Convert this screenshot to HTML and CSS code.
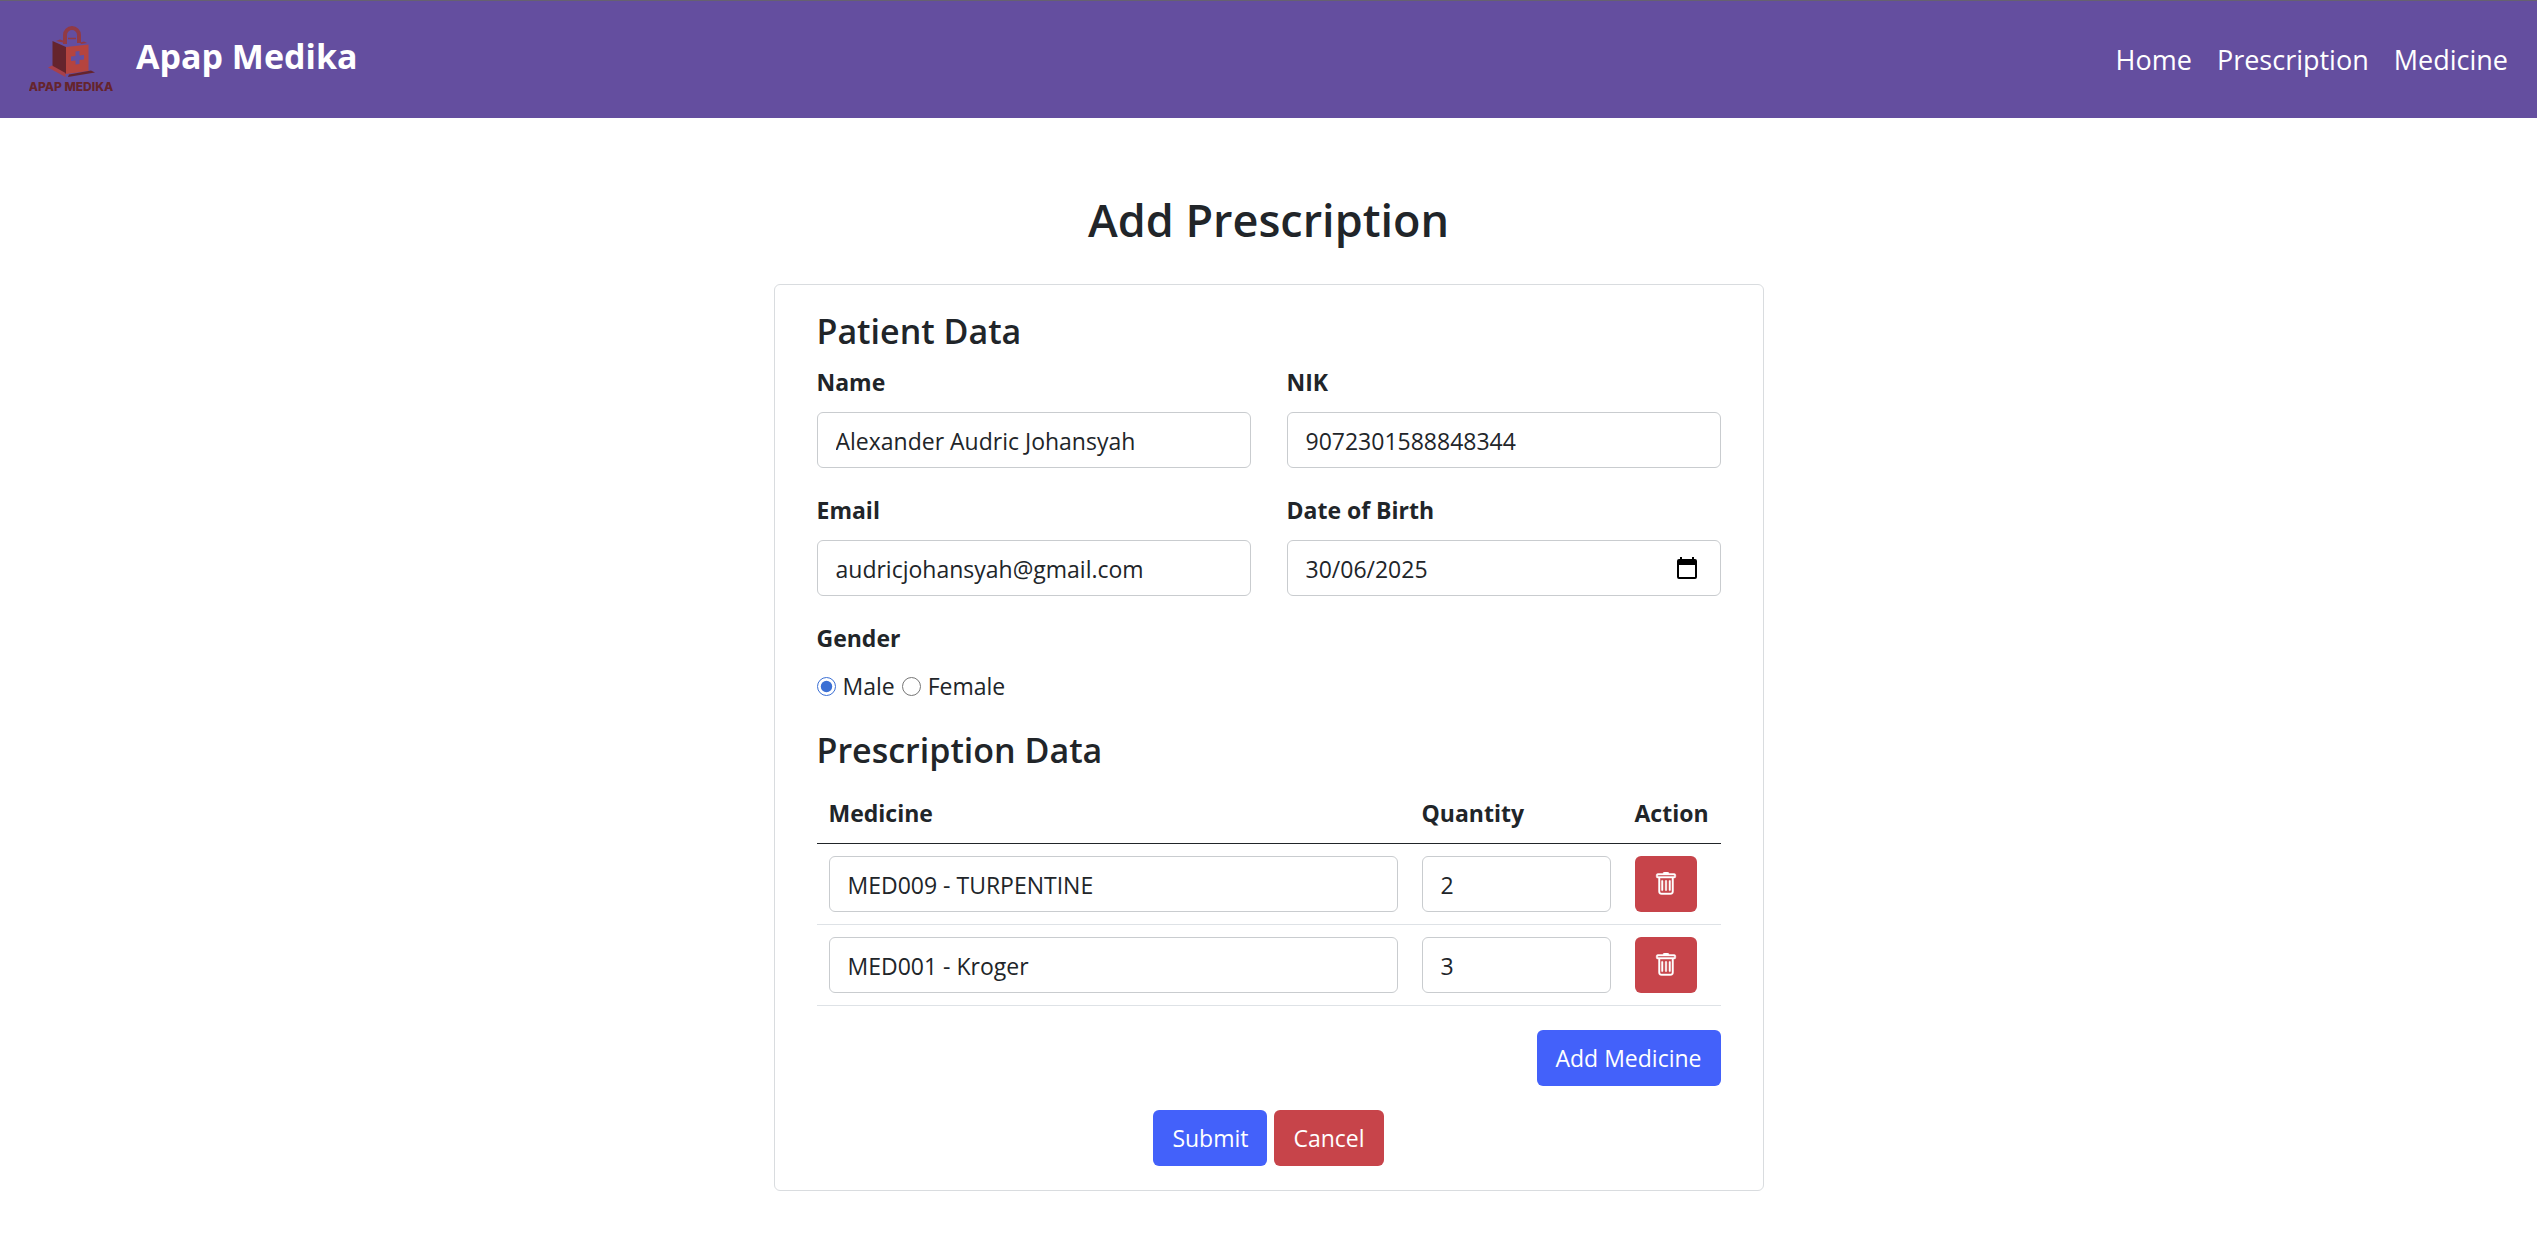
FILE: index.html
```html
<!DOCTYPE html>
<html lang="en">
<head>
<meta charset="utf-8">
<meta name="viewport" content="width=device-width, initial-scale=1">
<title>Apap Medika - Add Prescription</title>
<link rel="stylesheet" href="styles.css">
</head>
<body>
<header class="navbar">
  <a class="brand" href="#">
    <svg class="brand-logo" viewBox="0 0 84 67" width="84" height="67" role="img" aria-label="Apap Medika logo">
      <path d="M36 18V9a7 7 0 0 1 14 0v8" fill="none" stroke="#913a45" stroke-width="4"/>
      <path d="M39 12.500h8" stroke="#913a45" stroke-width="1.500"/>
      <path d="M27 15l4-1.500 3 1v2zM51 16.500l4-1 3 1.500-6 1z" fill="#913a45"/>
      <path d="M23.500 15L37 21v27l-13.500-6z" fill="#65242d"/>
      <path d="M37 21l22.500-2.500V45L37 48z" fill="#b5443f"/>
      <path d="M46.500 25.500l4-.5v4.500l4.500-.5v4.500l-4.500.5v4l-4 .5v-4l-4.500.5v-4.500l4.500-.5z" fill="#644e9f"/>
      <path d="M19 41.500l4-2 13.500 7.500v4z" fill="#a8404a"/>
      <path d="M40 48.500l22-4 4 2L39 51z" fill="#65242d"/>
      <text class="logo-text" x="42" y="65" text-anchor="middle">APAP MEDIKA</text>
    </svg>
    <span class="brand-name">Apap Medika</span>
  </a>
  <nav class="nav-links" aria-label="Main">
    <a href="#">Home</a>
    <a href="#">Prescription</a>
    <a href="#">Medicine</a>
  </nav>
</header>

<main class="page">
  <h1 class="page-title">Add Prescription</h1>
  <form class="card">
    <h2 class="section-title">Patient Data</h2>
    <div class="field-grid">
      <div class="field">
        <label class="label" for="name">Name</label>
        <input class="control" id="name" type="text" value="Alexander Audric Johansyah">
      </div>
      <div class="field">
        <label class="label" for="nik">NIK</label>
        <input class="control" id="nik" type="text" value="9072301588848344">
      </div>
      <div class="field">
        <label class="label" for="email">Email</label>
        <input class="control" id="email" type="email" value="audricjohansyah@gmail.com">
      </div>
      <div class="field">
        <label class="label" for="birth">Date of Birth</label>
        <div class="date-box">
          <input class="control" id="birth" type="text" inputmode="numeric" value="30/06/2025">
          <button class="date-button" type="button" aria-label="Open calendar">
            <svg viewBox="0 0 20 22" width="20" height="22" aria-hidden="true">
              <path fill="#000" fill-rule="evenodd" d="M3 0h2v2h10V0h2v2h1a2 2 0 0 1 2 2v16a2 2 0 0 1-2 2H2a2 2 0 0 1-2-2V4a2 2 0 0 1 2-2h1zM2 8v12h16V8z"/>
            </svg>
          </button>
        </div>
      </div>
    </div>
    <fieldset class="gender">
      <legend class="label">Gender</legend>
      <div class="radio-row">
        <label class="radio"><input type="radio" name="gender" value="male" checked>Male</label>
        <label class="radio"><input type="radio" name="gender" value="female">Female</label>
      </div>
    </fieldset>

    <h2 class="section-title">Prescription Data</h2>
    <table class="medicines">
      <thead>
        <tr>
          <th class="col-medicine" scope="col">Medicine</th>
          <th class="col-quantity" scope="col">Quantity</th>
          <th class="col-action" scope="col">Action</th>
        </tr>
      </thead>
      <tbody>
        <tr>
          <td><select class="control" aria-label="Medicine 1"><option>MED009 - TURPENTINE</option></select></td>
          <td><input class="control" type="text" inputmode="numeric" value="2" aria-label="Quantity 1"></td>
          <td>
            <button class="btn btn-danger" type="button" aria-label="Remove medicine 1">
              <svg viewBox="0 0 16 16" width="24" height="24" fill="currentColor" stroke="currentColor" stroke-width="0.300" aria-hidden="true">
                <path d="M5.500 5.500A.5.5 0 0 1 6 6v6a.5.5 0 0 1-1 0V6a.5.5 0 0 1 .5-.5m2.500 0a.5.5 0 0 1 .5.5v6a.5.5 0 0 1-1 0V6a.5.5 0 0 1 .5-.5m3 .5a.5.5 0 0 0-1 0v6a.5.5 0 0 0 1 0z"/>
                <path d="M14.500 3a1 1 0 0 1-1 1H13v9a2 2 0 0 1-2 2H5a2 2 0 0 1-2-2V4h-.5a1 1 0 0 1-1-1V2a1 1 0 0 1 1-1H6a1 1 0 0 1 1-1h2a1 1 0 0 1 1 1h3.500a1 1 0 0 1 1 1zM4.118 4 4 4.059V13a1 1 0 0 0 1 1h6a1 1 0 0 0 1-1V4.059L11.882 4zM2.500 3h11V2h-11z"/>
              </svg>
            </button>
          </td>
        </tr>
        <tr>
          <td><select class="control" aria-label="Medicine 2"><option>MED001 - Kroger</option></select></td>
          <td><input class="control" type="text" inputmode="numeric" value="3" aria-label="Quantity 2"></td>
          <td>
            <button class="btn btn-danger" type="button" aria-label="Remove medicine 2">
              <svg viewBox="0 0 16 16" width="24" height="24" fill="currentColor" stroke="currentColor" stroke-width="0.300" aria-hidden="true">
                <path d="M5.500 5.500A.5.5 0 0 1 6 6v6a.5.5 0 0 1-1 0V6a.5.5 0 0 1 .5-.5m2.500 0a.5.5 0 0 1 .5.5v6a.5.5 0 0 1-1 0V6a.5.5 0 0 1 .5-.5m3 .5a.5.5 0 0 0-1 0v6a.5.5 0 0 0 1 0z"/>
                <path d="M14.500 3a1 1 0 0 1-1 1H13v9a2 2 0 0 1-2 2H5a2 2 0 0 1-2-2V4h-.5a1 1 0 0 1-1-1V2a1 1 0 0 1 1-1H6a1 1 0 0 1 1-1h2a1 1 0 0 1 1 1h3.500a1 1 0 0 1 1 1zM4.118 4 4 4.059V13a1 1 0 0 0 1 1h6a1 1 0 0 0 1-1V4.059L11.882 4zM2.500 3h11V2h-11z"/>
              </svg>
            </button>
          </td>
        </tr>
      </tbody>
    </table>
    <div class="actions actions-end">
      <button class="btn btn-primary" type="button">Add Medicine</button>
    </div>
    <div class="actions actions-center">
      <button class="btn btn-primary" type="submit">Submit</button>
      <button class="btn btn-danger" type="button">Cancel</button>
    </div>
  </form>
</main>
</body>
</html>
```
FILE: styles.css
```css
*, *::before, *::after { box-sizing: border-box; }

body {
  margin: 0;
  background: #fff;
  color: #212529;
  font-family: "Open Sans", "Noto Sans", sans-serif;
  font-size: 23px;
  line-height: 36px;
}

.navbar {
  display: flex;
  align-items: center;
  justify-content: space-between;
  height: 118px;
  padding: 0 29px;
  border-top: 1px solid #666170;
  background: #644e9f;
}

.brand,
.nav-links a { color: #fff; text-decoration: none; }

.brand { display: flex; align-items: center; gap: 23px; }
.brand-logo { display: block; }
.logo-text {
  fill: #65242d;
  font-family: Inter, sans-serif;
  font-size: 12px;
  font-weight: 800;
}
.brand-name { padding-bottom: 8px; font-size: 34px; font-weight: 700; }

.nav-links { display: flex; gap: 25px; font-size: 27px; }

.page {
  max-width: 990px;
  margin: 0 auto;
  padding: 73px 0 45px;
}

.page-title {
  margin: 0 0 35px;
  font-size: 45px;
  font-weight: 600;
  line-height: 58px;
  text-align: center;
}

.card {
  padding: 25px 42px 24px;
  border: 1px solid #d9dcdf;
  border-radius: 6px;
}

.section-title {
  margin: 0 0 12px;
  font-size: 34px;
  font-weight: 600;
  line-height: 42px;
}

.field-grid {
  display: grid;
  grid-template-columns: 1fr 1fr;
  gap: 24px 36px;
  margin-bottom: 24px;
}

.field { display: flex; flex-direction: column; gap: 12px; }

.label { padding: 0; font-weight: 700; }

.control {
  display: block;
  appearance: none;
  width: 100%;
  height: 56px;
  padding: 2px 18px 0;
  border: 1px solid #c9cccf;
  border-radius: 6px;
  background: #fff;
  color: inherit;
  font: inherit;
}

.date-box { position: relative; }
.date-button {
  position: absolute;
  top: 0;
  right: 19px;
  display: flex;
  align-items: center;
  height: 56px;
  padding: 0 5px;
  border: 0;
  background: none;
}

.gender { min-width: 0; margin: 0 0 25px; padding: 0; border: 0; }
.radio-row { display: flex; gap: 7px; padding-top: 12px; }
.radio { display: flex; align-items: center; gap: 7px; }
.radio input {
  width: 19px;
  height: 19px;
  margin: 0;
  accent-color: #3b6fd4;
}

.medicines {
  width: 100%;
  border-collapse: separate;
  border-spacing: 0;
  table-layout: fixed;
}
.medicines th,
.medicines td {
  padding: 12px;
  border-bottom: 1px solid #dee2e6;
  text-align: left;
}
.medicines th { border-bottom-color: #212529; font-weight: 700; }
.col-quantity { width: 213px; }
.col-action { width: 98px; }

.btn {
  display: flex;
  align-items: center;
  justify-content: center;
  height: 56px;
  padding: 0 19px;
  border: 0;
  border-radius: 6px;
  color: #fff;
  font: inherit;
}
.btn-primary { background: #4361fa; }
.btn-danger { background: #c7444a; }

.actions { display: flex; gap: 7px; padding-top: 24px; }
.actions-end { justify-content: flex-end; }
.actions-center { justify-content: center; }
```
